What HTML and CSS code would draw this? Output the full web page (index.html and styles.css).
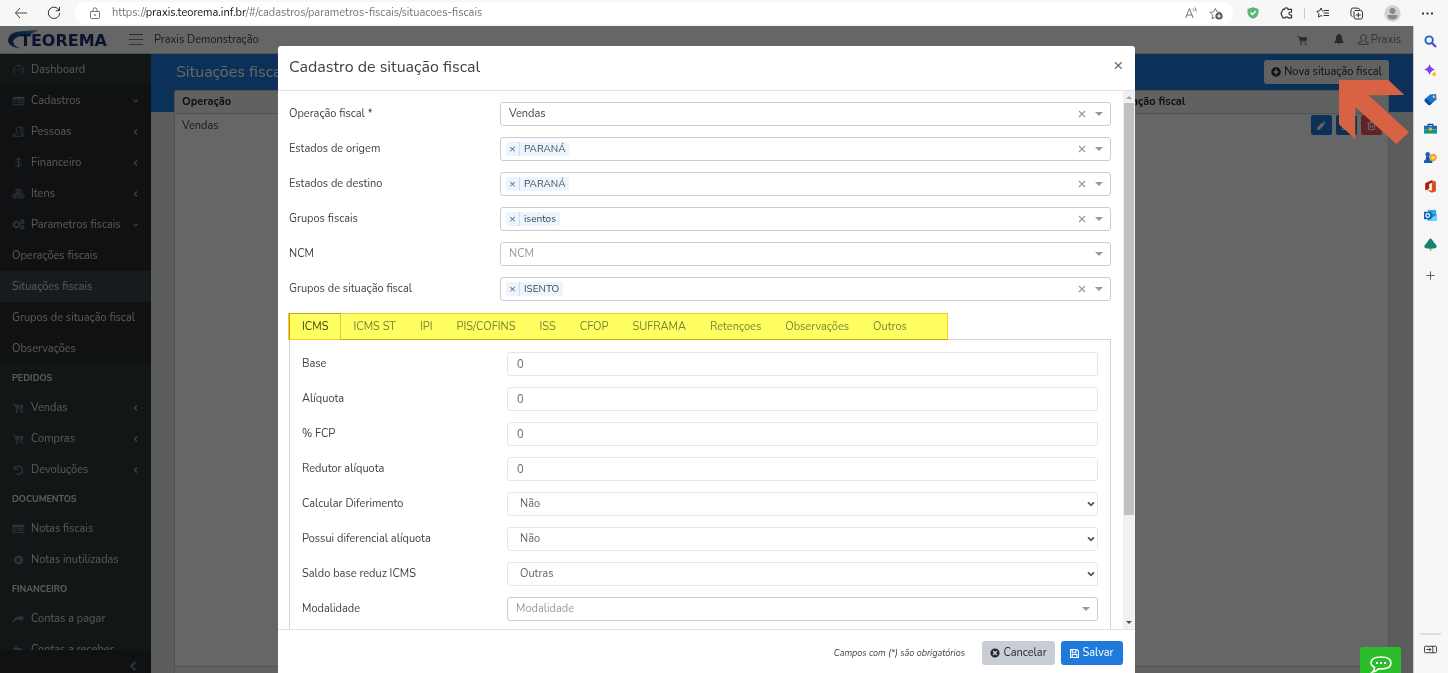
FILE: index.html
```html
<!DOCTYPE html>
<html lang="pt-BR">
<head>
<meta charset="utf-8">
<title>Praxis - Situações fiscais</title>
<link rel="stylesheet" href="styles.css">
</head>
<body>
<svg class="defs" aria-hidden="true">
  <symbol id="card" viewBox="0 0 14 12"><path fill="currentColor" fill-rule="evenodd" d="M1 1h12q1 0 1 1v8q0 1-1 1H1q-1 0-1-1V2q0-1 1-1zm0 3v6h12V4zm1 1h2v1H2zm3 0h7v1H5zM2 7h2v1H2zm3 0h7v1H5z"/></symbol>
  <symbol id="cart" viewBox="0 0 14 12"><path fill="currentColor" d="M0 1h3l.4 1.4H13L12 7H4.6l.2 1H12v1H4L2.300 2H0zM4 10h2v2H4zm6 0h2v2h-2z"/></symbol>
  <symbol id="cartplus" viewBox="0 0 14 12"><path fill="currentColor" fill-rule="evenodd" d="M0 1h3l.4 1.400H13L12 7H4.600l.2 1H12v1H4L2.300 2H0zM4 10h2v2H4zm6 0h2v2h-2zM7.500 3v1.200H6v1h1.500v1.300h1V5.200H10v-1H8.500V3z"/></symbol>
  <symbol id="xcircle" viewBox="0 0 12 12"><path fill="currentColor" fill-rule="evenodd" d="M6 .5a5.500 5.500 0 1 0 0 11 5.500 5.500 0 0 0 0-11zM4.300 3.100 6 4.800l1.700-1.700 1.200 1.200L7.200 6l1.700 1.700-1.200 1.200L6 7.200 4.300 8.900 3.100 7.700 4.800 6 3.100 4.300z"/></symbol>
  <symbol id="left" viewBox="0 0 6 8"><path fill="none" stroke="currentColor" stroke-width="1.300" d="M4.500 1.500 2 4l2.500 2.500"/></symbol>
  <symbol id="down" viewBox="0 0 8 6"><path fill="none" stroke="currentColor" stroke-width="1.300" d="M1.500 1.500 4 4l2.500-2.500"/></symbol>
  <symbol id="caret" viewBox="0 0 8 4"><path fill="currentColor" d="M0 0h8L4 4z"/></symbol>
  <symbol id="cross" viewBox="0 0 8 8"><path fill="none" stroke="currentColor" stroke-width="1.200" d="m1 1 6 6m0-6L1 7"/></symbol>
  <symbol id="chev" viewBox="0 0 8 6"><path fill="none" stroke="currentColor" stroke-width="1.700" d="M1 1.300 4 4.300l3-3"/></symbol>
  <symbol id="share" viewBox="0 0 14 12"><path fill="currentColor" d="M9 1l5 4-5 4V6.500C5 6.400 2 7 1 11-.5 6 3 3.300 9 3.300z"/></symbol>
</svg>

<header class="browser">
  <button class="nav" aria-label="Voltar"><svg width="14" height="12" viewBox="0 0 14 12"><path fill="none" stroke="#444" d="M6 1 1.500 6 6 11M1.500 6H13"/></svg></button>
  <button class="nav reload" aria-label="Atualizar"><svg width="14" height="14" viewBox="0 0 14 14"><path fill="none" stroke="#333" d="M12.200 4.500A5.700 5.700 0 1 0 12.700 7M12.500 1v3.700H8.800"/></svg></button>
  <div class="address">
    <svg width="10" height="12" viewBox="0 0 10 12"><path fill="none" stroke="#777" d="M.5 4.500h9v6q0 1-1 1h-7q-1 0-1-1zM3 4.500V2.800q0-2 2-2t2 2v1.700"/><circle cx="5" cy="8" r=".9" fill="#777"/></svg>
    <span class="url">https://<b>praxis.teorema.inf.br</b>/#/cadastros/parametros-fiscais/situacoes-fiscais</span>
    <svg width="12" height="12" viewBox="0 0 12 12"><path fill="none" stroke="#777" d="M.6 11 4.400 1.500 8.200 11M1.800 8h5.300M8 1.500q1 1 .8 2.500M9.800.5q1.600 1.500 1.300 3.800"/></svg>
    <svg width="14" height="13" viewBox="0 0 14 13"><path fill="none" stroke="#777" d="M6 10.200 3 11.800l.6-3.700L1 5.400l3.700-.5L6.300 1.500l1.700 3.400 3.700.5"/><circle cx="10" cy="9" r="3.600" fill="#555"/><path stroke="#fff" d="M8 9h4m-2-2v4"/></svg>
  </div>
  <div class="tools">
    <svg width="12" height="12" viewBox="0 0 12 12"><path fill="#5cb870" d="M6 .3 11.500 2v4Q11 10 6 11.800 1 10 .5 6V2z"/><path fill="none" stroke="#fff" stroke-width="1.500" d="m3.500 5.500 2 2 3.200-3.500"/></svg>
    <svg width="13" height="13" viewBox="0 0 13 13"><path fill="none" stroke="#333" stroke-width="1.200" d="M4.500 2.300Q4.500.8 6.300.8T8 2.300h3.500V5Q9 4.800 9 6.500t2.500 1.600v2.700H8.200q0-1-1.500-1t-1.500 1H3L1 6.500l2-4.200z"/></svg>
    <i class="bar"></i>
    <svg width="13" height="12" viewBox="0 0 13 12"><path fill="none" stroke="#333" d="M7.500 4 6.200 3.800 5 1 3.600 3.900.8 4.300l2.100 2.200L2.400 10 5 8.600l1.200.6M8 3.500h5M7.500 6H13M7.500 8.500H13"/></svg>
    <svg width="13" height="13" viewBox="0 0 13 13"><path fill="none" stroke="#333" d="M2.500 9.500Q.6 9 .8 7L1 3Q1.200 1 3 1l5 .2q1.600.1 1.800 1.500M5 3.500h5.500q2 0 2 2V10q0 2-2 2H6q-2 0-2-2V4.500zM8.300 5.500v5M5.800 8h5"/></svg>
    <svg width="17" height="17" viewBox="0 0 17 17"><circle cx="8.500" cy="8.500" r="8.200" fill="#d3d1ce"/><circle cx="8.500" cy="6" r="3" fill="#8c8884"/><path fill="#8c8884" d="M3.500 10h10q0 4.500-5 4.500t-5-4.500z"/></svg>
    <svg width="11" height="3" viewBox="0 0 11 3"><path fill="#333" d="M0 .5h2v2H0zm4.500 0h2v2h-2zm4.500 0h2v2H9z"/></svg>
  </div>
</header>

<div class="window">
<div class="app">
  <header class="apphead">
    <a class="logo" href="#"><svg width="32" height="19" viewBox="0 0 32 19"><defs><linearGradient id="sw"><stop offset="0" stop-color="#233a7a"/><stop offset="1" stop-color="#1aa0d8"/></linearGradient></defs><path fill="url(#sw)" d="M30 0Q24 5 14 5.500 4 8 5.500 13q1 3 7 5.500Q1 17 0 11 0 1 17 1z"/></svg><span>TEOREMA</span></a>
    <button class="burger" aria-label="Menu"><svg width="14" height="11" viewBox="0 0 14 11"><path stroke="#73818f" d="M0 .5h14M0 5.500h14M0 10.500h14"/></svg></button>
    <span>Praxis Demonstração</span>
    <div class="headright">
      <svg width="11" height="10"><use href="#cart"/></svg>
      <svg width="10" height="11" viewBox="0 0 10 11"><path fill="currentColor" d="M5 0q3 .6 3 4 0 3 2 5H0q2-2 2-5 0-3.400 3-4zM3.800 9.500h2.400Q5 11.500 3.800 9.500z"/></svg>
      <a href="#" class="user"><svg width="11" height="11" viewBox="0 0 11 11"><path fill="none" stroke="currentColor" d="M4 6.500Q2.500 5 2.700 3 3 .7 5.500.7T8.300 3q.2 2-1.300 3.500v1l3.200 1v1.800H.8V8.500l3.200-1z"/></svg>Praxis</a>
    </div>
  </header>

  <div class="appbody">
    <aside class="side">
      <nav>
        <a href="#"><svg width="12" height="11" viewBox="0 0 12 11"><path fill="none" stroke="currentColor" d="M2.500 9.800a5 5 0 1 1 7 0M6 6.500 8 4M6 2v1M2.500 6h1M8.500 6h1"/></svg>Dashboard</a>
        <div class="group">
          <a href="#"><svg width="12" height="10"><use href="#card"/></svg>Cadastros<svg class="arr" width="7" height="6"><use href="#down"/></svg></a>
          <a href="#"><svg width="12" height="11" viewBox="0 0 12 11"><path fill="none" stroke="currentColor" d="M5 6.500Q3.500 5 3.700 3T6.200 1 8.500 3 7.500 6.500v1l2.500 1v1.700H1V8.500l4-1zM8 1q2.500-.2 2.500 2T9.800 6.200v.8l1.500.8v1.700"/></svg>Pessoas<svg class="arr" width="6" height="8"><use href="#left"/></svg></a>
          <a href="#"><svg width="12" height="11" viewBox="0 0 12 11"><path fill="none" stroke="currentColor" d="M9 3.500Q8.500 2 6 2T3.300 3.700Q3.300 5 6 5.300t2.800 1.900Q8.800 9 6 9T3 7.500M6 0v11"/></svg>Financeiro<svg class="arr" width="6" height="8"><use href="#left"/></svg></a>
          <a href="#"><svg width="13" height="11" viewBox="0 0 13 11"><path fill="none" stroke="currentColor" d="m6.500.7 2.500 1v2.600l-2.500 1-2.500-1V1.700zM4 2l2.500 1L9 2M6.500 3v2M3.500 5.500l2.500 1v2.700l-2.500 1-2.700-1V6.500zM1 6.700l2.500 1 2.500-1m-2.500 1v2.500m6-4.700 2.500 1v2.700l-2.500 1-2.700-1V6.500zM7 6.700l2.500 1 2.500-1m-2.500 1v2.500"/></svg>Itens<svg class="arr" width="6" height="8"><use href="#left"/></svg></a>
          <a href="#"><svg width="13" height="11" viewBox="0 0 13 11"><circle cx="4.500" cy="5.500" r="2.500" fill="none" stroke="currentColor" stroke-width="1.600"/><circle cx="4.500" cy="5.500" r="3.700" fill="none" stroke="currentColor" stroke-dasharray="1.500 1.400"/><circle cx="10.500" cy="2.700" r="1.500" fill="none" stroke="currentColor" stroke-width="1.400"/><circle cx="10.500" cy="8.300" r="1.500" fill="none" stroke="currentColor" stroke-width="1.400"/></svg>Parametros fiscais<svg class="arr" width="7" height="6"><use href="#down"/></svg></a>
          <a href="#">Operações fiscais</a>
          <a href="#" class="active">Situações fiscais</a>
          <a href="#">Grupos de situação fiscal</a>
          <a href="#">Observações</a>
        </div>
        <h2>PEDIDOS</h2>
        <a href="#"><svg width="12" height="10"><use href="#cartplus"/></svg>Vendas<svg class="arr" width="6" height="8"><use href="#left"/></svg></a>
        <a href="#"><svg width="12" height="10"><use href="#cartplus"/></svg>Compras<svg class="arr" width="6" height="8"><use href="#left"/></svg></a>
        <a href="#"><svg width="12" height="10" viewBox="0 0 12 10"><path fill="none" stroke="currentColor" stroke-width="1.300" d="M2 4V1m0 3h3M2.300 3.700A4 4 0 1 1 4 8.700"/></svg>Devoluções<svg class="arr" width="6" height="8"><use href="#left"/></svg></a>
        <h2>DOCUMENTOS</h2>
        <a href="#"><svg width="12" height="10"><use href="#card"/></svg>Notas fiscais</a>
        <a href="#"><svg width="12" height="10"><use href="#xcircle"/></svg>Notas inutilizadas</a>
        <h2>FINANCEIRO</h2>
        <a href="#"><svg width="12" height="10"><use href="#share"/></svg>Contas a pagar</a>
        <a href="#"><svg width="12" height="10" viewBox="0 0 14 12"><path fill="currentColor" d="M5 1 0 5l5 4V6.500C9 6.400 12 7 13 11c1.500-5-2-7.700-8-7.700z"/></svg>Contas a receber</a>
      </nav>
      <button class="minimize" aria-label="Recolher menu"><svg width="8" height="10" viewBox="0 0 8 10"><path fill="none" stroke="#73818f" stroke-width="2" d="M6.500 1 2 5l4.500 4"/></svg></button>
    </aside>

    <main class="page">
      <div class="titlebar">
        <h1>Situações fiscais</h1>
        <button class="new"><svg width="10" height="10" viewBox="0 0 12 12"><path fill="currentColor" fill-rule="evenodd" d="M6 .3a5.700 5.700 0 1 0 0 11.400A5.700 5.700 0 0 0 6 .3zM5 2.800h2V5h2.200v2H7v2.200H5V7H2.800V5H5z"/></svg>Nova situação fiscal</button>
      </div>
      <div class="tablecard">
        <table>
          <thead><tr><th>Operação</th><th class="gs">Grupo de situação fiscal</th><th></th></tr></thead>
          <tbody><tr><td>Vendas</td><td></td><td class="acts">
            <button aria-label="Editar"><svg width="9" height="9" viewBox="0 0 9 9"><path fill="#fff" d="M0 9l.5-2.700L5.300 1.500l2.200 2.200-4.800 4.800zM6 .8Q7-.2 8 .9t.2 2z"/></svg></button>
            <button aria-label="Duplicar"><svg width="9" height="9" viewBox="0 0 9 9"><path fill="none" stroke="#fff" d="M.5 2.500h5v6h-5zM3 2V.5h5.500v6H6"/></svg></button>
            <button class="del" aria-label="Excluir"><svg width="9" height="9" viewBox="0 0 9 9"><path fill="none" stroke="#fff" d="M0 2h9M3 2V.5h3V2M1.500 2v6.500h6V2M3.500 4v3m2-3v3"/></svg></button>
          </td></tr></tbody>
        </table>
        <div class="cardfoot"></div>
      </div>
    </main>
  </div>

  <div class="backdrop"></div>

  <section class="modal" role="dialog" aria-labelledby="mt">
    <header class="mhead"><h2 id="mt">Cadastro de situação fiscal</h2><button aria-label="Fechar">×</button></header>
    <div class="mmid">
      <form class="mbody" id="f">
        <div class="rows">
          <div class="row"><label for="op">Operação fiscal *</label><div class="ng"><input id="op" value="Vendas"><button type="button" aria-label="Limpar"><svg width="8" height="8"><use href="#cross"/></svg></button><button type="button" aria-label="Abrir"><svg width="8" height="4"><use href="#caret"/></svg></button></div></div>
          <div class="row"><label for="eo">Estados de origem</label><div class="ng"><span class="tag"><button type="button" aria-label="Remover">×</button><span>PARANÁ</span></span><input id="eo"><button type="button" aria-label="Limpar"><svg width="8" height="8"><use href="#cross"/></svg></button><button type="button" aria-label="Abrir"><svg width="8" height="4"><use href="#caret"/></svg></button></div></div>
          <div class="row"><label for="ed">Estados de destino</label><div class="ng"><span class="tag"><button type="button" aria-label="Remover">×</button><span>PARANÁ</span></span><input id="ed"><button type="button" aria-label="Limpar"><svg width="8" height="8"><use href="#cross"/></svg></button><button type="button" aria-label="Abrir"><svg width="8" height="4"><use href="#caret"/></svg></button></div></div>
          <div class="row"><label for="gf">Grupos fiscais</label><div class="ng"><span class="tag"><button type="button" aria-label="Remover">×</button><span>isentos</span></span><input id="gf"><button type="button" aria-label="Limpar"><svg width="8" height="8"><use href="#cross"/></svg></button><button type="button" aria-label="Abrir"><svg width="8" height="4"><use href="#caret"/></svg></button></div></div>
          <div class="row"><label for="ncm">NCM</label><div class="ng"><input id="ncm" placeholder="NCM"><button type="button" aria-label="Abrir"><svg width="8" height="4"><use href="#caret"/></svg></button></div></div>
          <div class="row"><label for="gs">Grupos de situação fiscal</label><div class="ng"><span class="tag"><button type="button" aria-label="Remover">×</button><span>ISENTO</span></span><input id="gs"><button type="button" aria-label="Limpar"><svg width="8" height="8"><use href="#cross"/></svg></button><button type="button" aria-label="Abrir"><svg width="8" height="4"><use href="#caret"/></svg></button></div></div>
        </div>
        <div class="tabs" role="tablist">
          <button type="button" role="tab" class="on" aria-selected="true">ICMS</button><button type="button" role="tab">ICMS ST</button><button type="button" role="tab">IPI</button><button type="button" role="tab">PIS/COFINS</button><button type="button" role="tab">ISS</button><button type="button" role="tab">CFOP</button><button type="button" role="tab">SUFRAMA</button><button type="button" role="tab">Retençoes</button><button type="button" role="tab">Observações</button><button type="button" role="tab">Outros</button>
          <div class="marker"></div>
        </div>
        <div class="panel rows">
          <div class="row"><label for="b">Base</label><input class="fc" id="b" value="0"></div>
          <div class="row"><label for="al">Alíquota</label><input class="fc" id="al" value="0"></div>
          <div class="row"><label for="fcp">% FCP</label><input class="fc" id="fcp" value="0"></div>
          <div class="row"><label for="ra">Redutor alíquota</label><input class="fc" id="ra" value="0"></div>
          <div class="row"><label for="cd">Calcular Diferimento</label><div class="sel"><select class="fc" id="cd"><option>Não</option><option>Sim</option></select><svg width="8" height="6"><use href="#chev"/></svg></div></div>
          <div class="row"><label for="pd">Possui diferencial alíquota</label><div class="sel"><select class="fc" id="pd"><option>Não</option><option>Sim</option></select><svg width="8" height="6"><use href="#chev"/></svg></div></div>
          <div class="row"><label for="sb">Saldo base reduz ICMS</label><div class="sel"><select class="fc" id="sb"><option>Outras</option><option>Isentas</option></select><svg width="8" height="6"><use href="#chev"/></svg></div></div>
          <div class="row"><label for="md">Modalidade</label><div class="ng"><input id="md" placeholder="Modalidade"><button type="button" aria-label="Abrir"><svg width="8" height="4"><use href="#caret"/></svg></button></div></div>
        </div>
      </form>
      <div class="scroll" aria-hidden="true"><svg class="up" width="6" height="3"><use href="#caret"/></svg><i></i><svg width="6" height="3"><use href="#caret"/></svg></div>
    </div>
    <footer class="mfoot"><em>Campos com (*) são obrigatórios</em><button class="cancel"><svg width="10" height="10"><use href="#xcircle"/></svg>Cancelar</button><button class="save" type="submit" form="f"><svg width="9" height="9" viewBox="0 0 10 10"><path fill="none" stroke="#fff" stroke-width="1.200" d="M.6.6h7L9.400 2.500v6.900H.6zM2.500.6v3h4v-3M2.500 9.400V6h5v3.400"/></svg>Salvar</button></footer>
  </section>

  <svg class="pointer" width="70" height="64" viewBox="0 0 210 192"><path fill="#d86344" d="M0 0h148l48 45-107 1 121 111-38 35L49 81v97L0 133z"/></svg>
  <button class="chat" aria-label="Chat"><svg width="22" height="18" viewBox="0 0 22 18"><path fill="none" stroke="#fff" stroke-width="1.600" d="M4.500 11.500Q1 9.500 1 7q0-6 10-6t10 6-10 6q-1.500 0-2.500-.2-2 2.700-6 3.200 2-1.800 2-4.500z"/><path fill="#fff" d="M6 6h2v2H6zm4 0h2v2h-2zm4 0h2v2h-2z"/></svg></button>
</div>

<aside class="edge">
  <svg viewBox="0 0 14 14"><circle cx="5.500" cy="5.500" r="4" fill="none" stroke="#1b5fd0" stroke-width="2"/><path stroke="#6c3fd8" stroke-width="2.400" d="m8.500 8.500 4.500 4.500"/></svg>
  <svg viewBox="0 0 14 14"><path fill="#8a3ee8" d="M6 0q1.200 4.800 6 6-4.800 1.200-6 6-1.200-4.800-6-6 4.800-1.200 6-6z"/><path fill="#f7b928" d="M11 8q.6 2.400 3 3-2.400.6-3 3-.6-2.400-3-3 2.400-.6 3-3z"/></svg>
  <svg viewBox="0 0 14 14"><path fill="#1976d2" d="M6.500 1.500 13 1l.5 6-7 6Q5 13.500 4 12L.6 8.500Q0 7.500 1 6.500z"/><path fill="#0c4aa3" d="m.6 8.500 3.400 3.500q1 1.500 2.500 1l2-2L2 5.800z"/><circle cx="10.600" cy="4" r="1.300" fill="#ffd54a"/></svg>
  <svg viewBox="0 0 14 14"><path fill="none" stroke="#0a4f8c" stroke-width="1.300" d="M4.500 5V2.500h5V5"/><path fill="#2268b8" d="M0 4h14v4H0z"/><path fill="#159384" d="M0 8h14v4.500H0z"/><path fill="#f7c52b" d="M5.500 6h3v3h-3z"/></svg>
  <svg viewBox="0 0 14 14"><circle cx="4" cy="3.500" r="2.500" fill="#1b62c4"/><path fill="#1659b5" d="M2.500 5h3L7 10h2v3H0v-3h1.500z"/><circle cx="9.800" cy="7" r="4" fill="#e9a82c"/><circle cx="9.800" cy="7" r="2" fill="#ffd978"/></svg>
  <svg viewBox="0 0 14 14"><path fill="#e04a20" d="M8.500.3 12.800 2v10l-4.300 1.700L3 11l5.500.3V3L5.500 4v5.300L1.500 11V3.500z"/><path fill="#a91d12" d="M5.500 4v5.300L1.500 11V3.500L8.500.3V3z"/></svg>
  <svg viewBox="0 0 14 14"><path fill="#35a8ea" d="M4 1h9v6H4z"/><path fill="#1681d5" d="M4 5.500 14 6v7H4z"/><path fill="#74ceff" d="m4 12 10-6v7H4z"/><path fill="#0763b4" d="M0 3h8v8H0z"/><circle cx="4" cy="7" r="2" fill="none" stroke="#fff" stroke-width="1.300"/></svg>
  <svg viewBox="0 0 14 14"><path fill="#f2a72b" d="M6 9h2v5H6z"/><path fill="#12846f" d="M7 .3q1.500.7 4 4.700 2.800 2.700 2.800 4.500Q13.500 11.500 7 11.500T.2 9.500Q.2 7.700 3 5 5.500 1 7 .3z"/></svg>
  <svg viewBox="0 0 14 14" class="plus"><path stroke="#555" d="M7 2.500v9M2.500 7h9"/></svg>
  <i></i>
  <svg viewBox="0 0 14 14"><path fill="none" stroke="#333" d="M1.500 3.500h11q1 0 1 1v5q0 1-1 1h-11q-1 0-1-1v-5q0-1 1-1zM9.500 3.500v7M2.500 7h5m-2-2 2 2-2 2"/></svg>
</aside>
</div>
</body>
</html>
```
FILE: styles.css
```css
* { box-sizing: border-box; }
body {
  margin: 0;
  height: 100vh;
  display: flex;
  flex-direction: column;
  overflow: hidden;
  font: 11px/16px Nunito, "Open Sans", "Noto Sans", sans-serif;
  color: #3c4248;
  background: #f7f7f7;
}
button, input, select { font: inherit; color: inherit; }
button { border: 0; padding: 0; background: none; display: inline-flex; align-items: center; justify-content: center; }
a { color: inherit; text-decoration: none; }
h1, h2 { margin: 0; font-weight: 400; }
svg { flex: none; display: block; }
.defs { position: absolute; width: 0; height: 0; }

/* browser bar */
.browser { height: 26px; flex: none; display: flex; align-items: center; padding-left: 14px; }
.reload { margin: 0 14px 0 19px; }
.address { flex: 1; height: 22px; display: flex; align-items: center; gap: 12px; padding: 0 10px 0 15px; background: #fff; border-radius: 11px; }
.url { flex: 1; color: #767676; }
.url b { font-weight: 400; color: #111; }
.tools { display: flex; align-items: center; gap: 21px; padding: 0 15px 0 14px; }
.bar { width: 1px; height: 11px; margin: 0 -10px; background: #ccc; }

.window { flex: 1; min-height: 0; display: flex; }
.app { flex: 1; min-width: 0; position: relative; overflow: hidden; display: flex; flex-direction: column; }

/* application header */
.apphead { height: 28px; flex: none; display: flex; align-items: center; background: #fff; border-bottom: 1px solid #c8ced3; padding-left: 8px; }
.logo { display: flex; align-items: center; width: 121px; position: relative; height: 19px; color: #1d2f6f; font: bold 16px/18px "DejaVu Sans", sans-serif; padding: 2px 0 0 12px; }
.logo svg { position: absolute; left: 0; top: 0; }
.logo span { position: relative; }
.burger { margin-right: 11px; }
.headright { margin-left: auto; display: flex; align-items: center; gap: 26px; padding-right: 12px; color: #5c6873; }
.user { display: flex; align-items: center; gap: 2px; margin-left: -12px; color: #73818f; }

.appbody { flex: 1; min-height: 0; display: flex; }
.side { width: 151px; flex: none; display: flex; flex-direction: column; background: #2e3838; color: #e4e7ea; }
.side nav { flex: 1; min-height: 0; overflow: hidden; }
.side nav a { height: 31px; display: flex; align-items: center; gap: 6px; padding: 0 12px; color: #dcdfe1; white-space: nowrap; }
.side nav a > svg { width: 13px; color: #73818f; }
.side nav a > .arr { width: 7px; margin-left: auto; color: #9aa5b0; }
.group { background: #282b30; }
.side .active { background: #3a444b; }
.side h2 { height: 28px; padding-left: 12px; font-size: 9px; line-height: 28px; font-weight: 700; }
.minimize { height: 23px; padding: 9px 14px 0 0; justify-content: flex-end; background: #282b30; }

/* page under the dialog */
.page { flex: 1; min-width: 0; display: flex; flex-direction: column; padding: 0 24px 0 23px; background: linear-gradient(#207adb 58px, #e4e9e7 58px); }
.titlebar { height: 36px; flex: none; display: flex; justify-content: space-between; align-items: center; color: #fff; }
.titlebar h1 { font-size: 16px; padding-left: 2px; }
.new { width: 125px; height: 24px; gap: 3px; background: #f0f3f5; color: #23282c; border-radius: 3px; white-space: nowrap; }
.tablecard { flex: 1; display: flex; flex-direction: column; background: #fff; border: 1px solid #c8ced3; border-bottom: 0; border-radius: 3px 3px 0 0; }
table { width: 100%; border-collapse: collapse; }
th { height: 22px; padding: 0 7px; text-align: left; background: #f0f3f2; border-bottom: 1px solid #c8ced3; color: #23282c; }
td { height: 26px; padding: 0 7px; }
th.gs { width: 225px; padding-left: 0; white-space: nowrap; }
.acts { width: 100px; padding: 0 6px 0 0; text-align: right; white-space: nowrap; font-size: 0; }
.acts button { width: 21px; height: 20px; margin-left: 4px; background: #207adb; border-radius: 2px; }
.acts .del { background: #f05a5f; }
.cardfoot { height: 7px; margin-top: auto; background: #f0f3f2; border-top: 1px solid #c8ced3; }

.backdrop { position: absolute; inset: 0; background: rgba(0, 0, 0, .6); }

/* dialog */
.modal { position: absolute; top: 20px; bottom: 0; left: 0; right: 0; margin: 0 auto; width: 61%; max-width: 857px; display: flex; flex-direction: column; background: #fff; border-radius: 3px 3px 0 0; }
.mhead { height: 45px; flex: none; display: flex; align-items: center; justify-content: space-between; padding: 0 12px 2px 11px; border-bottom: 1px solid #dfe3e6; }
.mhead h2 { font-size: 16px; line-height: 24px; }
.mhead button { font-size: 16px; font-weight: 700; color: #777; margin-bottom: 4px; }
.mmid { flex: 1; min-height: 0; display: flex; }
.mbody { flex: 1; min-width: 0; overflow: hidden; padding: 11px 12px 0 11px; }
.rows { display: grid; gap: 11px; }
.row { display: grid; grid-template-columns: 211px minmax(0, 1fr); align-items: center; }
.ng { height: 24px; display: flex; align-items: center; padding: 0 6px 0 5px; border: 1px solid #ccc; border-radius: 3px; color: #444; }
.ng input { flex: 1; min-width: 0; border: 0; outline: 0; padding: 0 3px; background: none; }
.ng input::placeholder { color: #999; }
.ng > button { width: 10px; margin-left: 7px; color: #999; }
.tag { height: 14px; display: flex; align-items: center; background: #ebf5ff; border-radius: 2px; font-size: 10px; line-height: 14px; }
.tag button { width: 14px; height: 14px; border-right: 1px solid #c2e0ff; }
.tag span { padding: 0 4px; }

.tabs { position: relative; display: flex; margin-top: 12px; height: 27px; }
.tabs button { padding: 0 12px; border: solid transparent; border-width: 1px 0; color: #7a858f; border-bottom-color: #d3d7db; white-space: nowrap; }
.tabs .on { border: 1px solid #c8ced3; border-bottom-color: #fff; color: #444; }
.marker { position: absolute; left: -1px; top: 0; width: 660px; height: 27px; background: #ffff61; border: 1px solid #fbc91f; border-left-width: 2px; mix-blend-mode: multiply; }
.panel { padding: 12px; border: 1px solid #d3d7db; margin-top: -1px; }
.panel .row { grid-template-columns: 205px minmax(0, 1fr); }
.fc { width: 100%; height: 24px; padding: 0 9px; border: 1px solid #e4e7ea; border-radius: 3px; background: #fff; color: #5c6873; appearance: none; }
select.fc { padding: 0 12px; }
.sel { position: relative; }
.sel svg { position: absolute; right: 3px; top: 9px; color: #455563; }

.scroll { width: 12px; flex: none; display: flex; flex-direction: column; align-items: center; justify-content: space-between; padding: 5px 0; background: #f1f1f1; color: #505050; }
.scroll i { width: 10px; height: 412px; margin: 4px 0 auto; background: #c1c1c1; }
.scroll .up { transform: rotate(180deg); color: #a3a3a3; }

.mfoot { height: 44px; flex: none; display: flex; align-items: flex-start; justify-content: flex-end; padding: 11px 12px 0; border-top: 1px solid #dfe3e6; }
.mfoot em { font-size: 9px; line-height: 24px; margin-right: 17px; }
.mfoot button { height: 24px; gap: 3px; border-radius: 3px; }
.cancel { width: 73px; background: #c8ced3; color: #23282c; margin-right: 6px; }
.save { width: 62px; background: #207adb; color: #fff; }

.pointer { position: absolute; right: 4px; top: 54px; }
.chat { position: absolute; right: 12px; bottom: 0; width: 41px; height: 26px; padding-top: 10px; background: #2bbd2b; border-radius: 3px 3px 0 0; }

/* browser side bar */
.edge { width: 35px; flex: none; display: flex; flex-direction: column; align-items: center; gap: 16px; padding: 9px 1px 0 0; border-left: 1px solid #ccc; }
.edge svg { width: 13px; height: 13px; }
.edge .plus { margin-top: 2px; }
.edge i { width: 21px; height: 2px; margin-top: auto; background: #ddd; margin-bottom: -8px; }
.edge svg:last-child { margin-bottom: 17px; }
```
